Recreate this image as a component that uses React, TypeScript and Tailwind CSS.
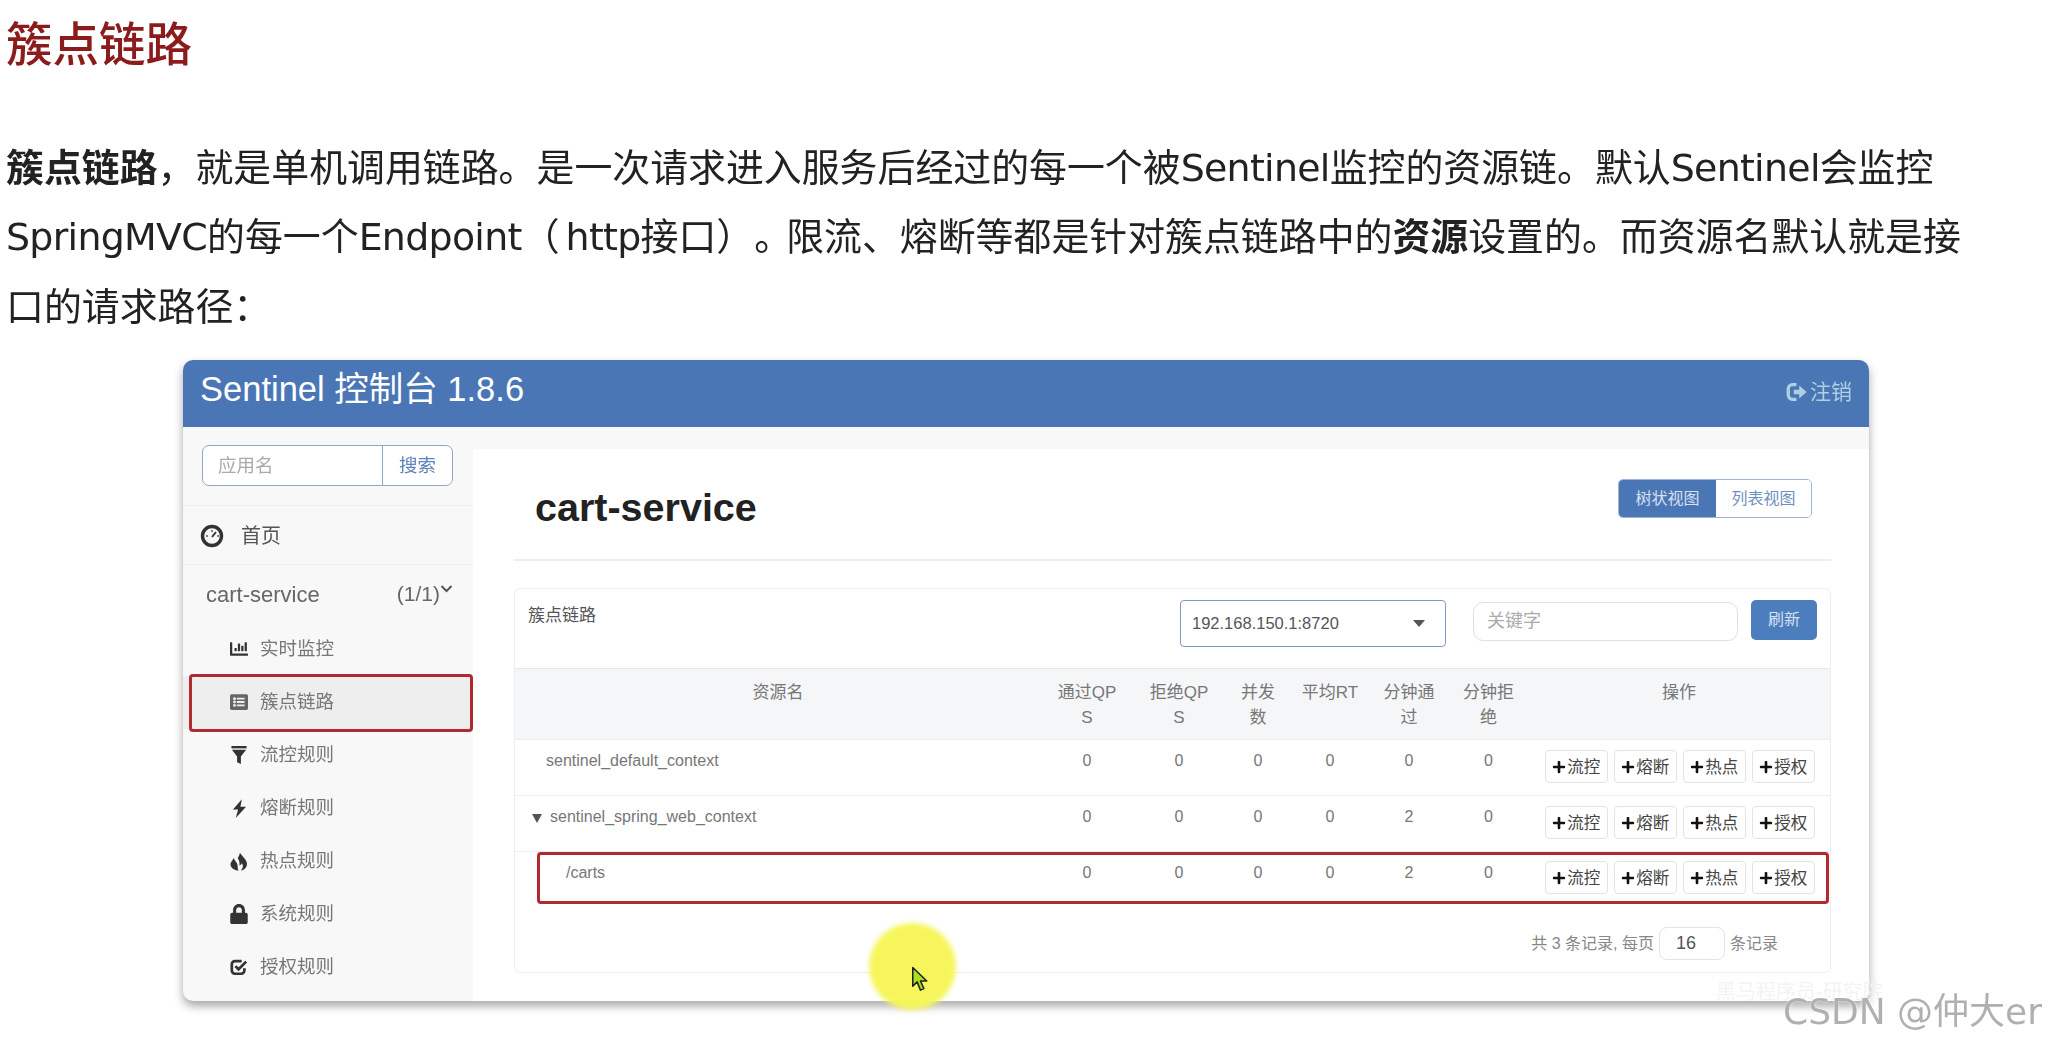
import React from "react";
import { FaChartBar, FaListAlt, FaLock, FaPlus } from "react-icons/fa";

const cjk = "font-['DejaVu_Sans','Noto_Sans_CJK_SC',sans-serif]";
const ui = "font-['Liberation_Sans','Noto_Sans_CJK_SC',sans-serif]";
const cols = "grid grid-cols-[526px_92px_92px_66px_78px_80px_79px_302px]";
const lat = "tracking-[-0.7px]";

function Gauge() {
  return (
    <svg viewBox="0 0 24 24" className="w-[24px] h-[24px]">
      <circle cx="12" cy="12" r="9.5" fill="none" stroke="#333" strokeWidth="3.4" />
      <path d="M12 13 L16 8" stroke="#333" strokeWidth="2" />
      <path d="M6 12h2M12 6v2M17 12h2" stroke="#555" strokeWidth="1.5" />
    </svg>
  );
}

function LogOut() {
  return (
    <svg viewBox="0 0 24 24" className="w-[23px] h-[22px]" fill="none">
      <path d="M12 4H7.5A4.5 4.5 0 0 0 3 8.5v7A4.5 4.5 0 0 0 7.5 20H12" stroke="currentColor" strokeWidth="3.6" />
      <path d="M9 9.5h6V5l8 7-8 7v-4.5H9z" fill="currentColor" />
    </svg>
  );
}

function Funnel() {
  return (
    <svg viewBox="0 0 16 20" className="w-[16px] h-[19px]" fill="currentColor">
      <path d="M0 0h16v2.5H0z" />
      <path d="M0.5 4h15L10 11v8l-4 -2v-6z" />
    </svg>
  );
}

function Flash() {
  return (
    <svg viewBox="0 0 16 20" className="w-[15px] h-[19px]" fill="currentColor">
      <path d="M10.5 0 L1 11 H6.5 L4 20 L15 8 H9 Z" />
    </svg>
  );
}

function Fire() {
  return (
    <svg viewBox="0 0 20 20" className="w-[18px] h-[19px]" fill="currentColor">
      <path d="M11 0c1 3 6 6 7.5 10.5C20 15.5 16 20 12 20c2-2 3.5-5 1-8-.5 1.5-1.5 2-2.5 2.5C11 11 10 8 8.5 6.5 9.5 4.5 11 2.5 11 0z" />
      <path d="M4 6c.5 2 3 4 4 6.5S8 18 9.5 20C5 20 .5 17 .5 13 .5 10.5 3 9 4 6z" />
    </svg>
  );
}

function Check() {
  return (
    <svg viewBox="0 0 20 20" className="w-[18px] h-[18px]" fill="none" stroke="currentColor">
      <path d="M16 11.5v2.500a3.500 3.500 0 0 1-3.500 3.500H5.500A3.500 3.500 0 0 1 2 14V7a3.500 3.500 0 0 1 3.500-3.500H13" strokeWidth="3" />
      <path d="M6 9l3.500 3.500L18 4" strokeWidth="3" />
    </svg>
  );
}

const side = [
  { t: "实时监控", i: <FaChartBar className="w-[20px] h-[18px]" /> },
  { t: "簇点链路", i: <FaListAlt className="w-[18px] h-[18px] text-[#666]" />, active: true },
  { t: "流控规则", i: <Funnel /> },
  { t: "熔断规则", i: <Flash /> },
  { t: "热点规则", i: <Fire /> },
  { t: "系统规则", i: <FaLock className="w-[18px] h-[20px]" /> },
  { t: "授权规则", i: <Check /> },
];

const heads: string[][] = [
  ["资源名"],
  ["通过QP", "S"],
  ["拒绝QP", "S"],
  ["并发", "数"],
  ["平均RT"],
  ["分钟通", "过"],
  ["分钟拒", "绝"],
  ["操作"],
];

const rows = [
  { name: "sentinel_default_context", pl: "pl-[31px]", v: [0, 0, 0, 0, 0, 0], bt: "pt-[10px]" },
  { name: "sentinel_spring_web_context", pl: "pl-[17px]", v: [0, 0, 0, 0, 2, 0], arrow: true, bt: "pt-[10px]" },
  { name: "/carts", pl: "pl-[51px]", v: [0, 0, 0, 0, 2, 0], boxed: true, bt: "pt-[9px]" },
];

function Ops() {
  return (
    <div className="flex justify-end gap-[5.5px] pr-[15px]">
      {["流控", "熔断", "热点", "授权"].map((t) => (
        <div key={t} className="w-[63.5px] h-[33px] flex items-center justify-center gap-[1px] bg-white border border-[#e3e3e3] rounded-[4px] text-[16.5px] text-[#444]">
          <FaPlus className="w-[14px] h-[14px] text-[#111] shrink-0" />
          <span>{t}</span>
        </div>
      ))}
    </div>
  );
}

export default function App() {
  return (
    <div className="relative w-[2052px] h-[1046px] overflow-hidden bg-white">
      <h1 className={`h-[86px] pt-[5px] pl-[6px] flex items-center text-[46.5px] font-medium text-[#8c1c1c] blur-[0.4px] ${cjk}`}>簇点链路</h1>

      <p className={`mt-[48px] pl-[6px] w-[1962px] text-[37.9px] leading-[69.4px] text-[#222] [text-spacing-trim:space-all] blur-[0.3px] ${cjk}`}>
        <b>簇点链路</b>，就是单机调用链路。是一次请求进入服务后经过的每一个被<span className={lat}>Sentinel</span>监控的资源链。默认<span className={lat}>Sentinel</span>会监控<span className={lat}>SpringMVC</span>的每一个<span className={lat}>Endpoint</span>（<span className={`ml-[6px] ${lat}`}>http</span>接口）<span className="mr-[-6px]">。</span>限流、熔断等都是针对簇点链路中的<b>资源</b>设置的。而资源名默认就是接口的请求路径：
      </p>

      <div className={`mt-[18px] ml-[183px] w-[1686px] h-[641px] rounded-[10px] overflow-hidden bg-[#f8f8f8] shadow-[0_5px_10px_rgba(0,0,0,0.35)] blur-[0.5px] ${ui}`}>
        <header className="h-[67px] bg-[#4a76b6] flex items-center justify-between pl-[17px] pr-[17px]">
          <span className="text-[34.5px] text-white pb-[8px]">Sentinel 控制台 1.8.6</span>
          <span className="flex items-center gap-[2px] pb-[3px] text-[21px] text-[#add0e2]">
            <LogOut />
            注销
          </span>
        </header>

        <div className="flex h-[574px]">
          <aside className="w-[290px] shrink-0 text-[#666]">
            <div className="h-[78px] pt-[18px] pl-[19px]">
              <div className="flex w-[251px] h-[41px] bg-white border border-[#8fa6c8] rounded-[7px] text-[18.5px] overflow-hidden">
                <div className="flex-1 pl-[15px] flex items-center text-[#aaa]">应用名</div>
                <div className="w-[70px] border-l border-[#8fa6c8] flex items-center justify-center text-[#5d83b8]">搜索</div>
              </div>
            </div>
            <div className="h-[60px] pt-[2px] border-y border-[#eeeeee] flex items-center pl-[17px] gap-[17px] text-[20px] text-[#555]">
              <Gauge />
              <span>首页</span>
            </div>
            <div className="h-[58px] flex items-center pl-[23px] pr-[20px] text-[#666]">
              <span className="flex-1 text-[22px]">cart-service</span>
              <span className="text-[21px]">(1/1)</span>
              <svg viewBox="0 0 12 8" className="w-[13px] h-[8px] mb-[10px]" fill="none" stroke="#555" strokeWidth="2"><path d="M1 1l5 5 5-5" /></svg>
            </div>
            {side.map((s) => (
              <div key={s.t} className={`relative h-[53px] flex items-center text-[18.5px] text-[#777] ${s.active ? "bg-[#eeeeee]" : ""}`}>
                <span className="w-[47px] ml-[36px] shrink-0 flex justify-center pr-[7px] pb-[1px] text-[#333]">{s.i}</span>
                <span className="-ml-[6px] pb-[1px]">{s.t}</span>
                {s.active && <div className="absolute left-[6px] right-0 top-[-2px] h-[58px] border-[3px] border-[#b12a2f] rounded-[4px]" />}
              </div>
            ))}
          </aside>

          <div className="flex-1 pt-[22px] min-w-0">
            <main className="h-full bg-white pl-[41px] pr-[38px]">
              <div className="h-[112px] border-b-2 border-[#eeeeee] flex justify-between items-start">
                <h2 className="pl-[21px] pt-[35px] text-[39.5px] leading-[46px] font-bold text-[#222]">cart-service</h2>
                <div className="mt-[30px] mr-[19px] flex w-[194px] h-[39px] rounded-[5px] overflow-hidden border border-[#9fb4d3] text-[16px]">
                  <div className="w-[97px] bg-[#4a76b6] text-[#d5e0f0] flex items-center justify-center">树状视图</div>
                  <div className="flex-1 bg-white text-[#6f8fbe] flex items-center justify-center">列表视图</div>
                </div>
              </div>

              <section className="mt-[27px] h-[385px] border border-[#eeeeee] rounded-[6px]">
                <div className="h-[80px] border-b border-[#e8e8e8] flex items-start pr-[13px]">
                  <div className="flex-1 pl-[13px] pt-[15px] text-[17px] leading-[24px] text-[#555]">簇点链路</div>
                  <div className="mt-[11px] w-[266px] h-[47px] border-[1.5px] border-[#8098c4] rounded-[4px] flex items-center justify-between pl-[11px] pr-[20px] text-[16.5px] text-[#555]">
                    <span>192.168.150.1:8720</span>
                    <span className="w-0 h-0 border-x-[6px] border-x-transparent border-t-[7px] border-t-[#555]" />
                  </div>
                  <div className="mt-[13px] ml-[27px] w-[265px] h-[39px] border border-[#e0e0e0] rounded-[10px] flex items-center pl-[13px] text-[18px] text-[#aaa]">关键字</div>
                  <div className="mt-[11px] ml-[13px] w-[66px] h-[40px] bg-[#4c7dbd] rounded-[5px] flex items-center justify-center text-[16px] text-[#d5e0f0]">刷新</div>
                </div>

                <div className={`${cols} h-[71px] bg-[#f5f6f8] border-b border-[#eeeeee] pt-[11px] text-[17px] leading-[25px] text-[#777]`}>
                  {heads.map((h, i) => (
                    <div key={i} className="text-center">
                      {h.map((l) => <div key={l}>{l}</div>)}
                    </div>
                  ))}
                </div>

                {rows.map((r) => (
                  <div key={r.name} className={`${cols} relative h-[56px] text-[16px] leading-[24px] text-[#777] ${r.boxed ? "" : "border-b border-[#eeeeee]"}`}>
                    <div className={`pt-[9px] flex items-start ${r.pl}`}>
                      {r.arrow && <span className="mt-[9px] mr-[8px] w-0 h-0 border-x-[5.5px] border-x-transparent border-t-[9px] border-t-[#555]" />}
                      <span>{r.name}</span>
                    </div>
                    {r.v.map((v, i) => (
                      <div key={i} className="pt-[9px] text-center">{v}</div>
                    ))}
                    <div className={r.bt}><Ops /></div>
                    {r.boxed && <div className="absolute left-[22px] right-[1px] top-0 h-[52px] border-[3px] border-[#b12a2f] rounded-[4px]" />}
                  </div>
                ))}

                <div className="flex justify-end items-center pt-[19px] pr-[52px] text-[16px] text-[#888]">
                  <span>共 3 条记录, 每页</span>
                  <div className="mx-[5px] w-[66px] h-[33px] border border-[#e3e3e3] rounded-[8px] flex items-center pl-[16px] text-[18px] text-[#555]">16</div>
                  <span>条记录</span>
                </div>
              </section>
            </main>
          </div>
        </div>
      </div>

      <div className="absolute left-[869px] top-[923px] w-[87px] h-[87px] rounded-full bg-[#f6f65c] blur-[2.5px]" />
      <svg viewBox="0 0 18 28" className="absolute left-[911px] top-[966px] w-[18px] h-[27px]">
        <path d="M1.5 1.5 V21 L6 16.5 L9.5 25 L13 23.5 L9.5 15.5 H16 Z" fill="#a9e21c" stroke="#222" strokeWidth="1.6" strokeLinejoin="round" />
      </svg>

      <div className={`absolute left-[1716px] top-[977px] text-[20px] text-[#f3f3f3] ${ui}`}>黑马程序员-研究院</div>
      <div className={`absolute left-[1783px] top-[988px] whitespace-nowrap text-[36px] leading-[48px] text-[#b0b0b0] [text-shadow:0_0_2px_#fff] ${cjk}`}>CSDN @仲大er</div>
    </div>
  );
}
